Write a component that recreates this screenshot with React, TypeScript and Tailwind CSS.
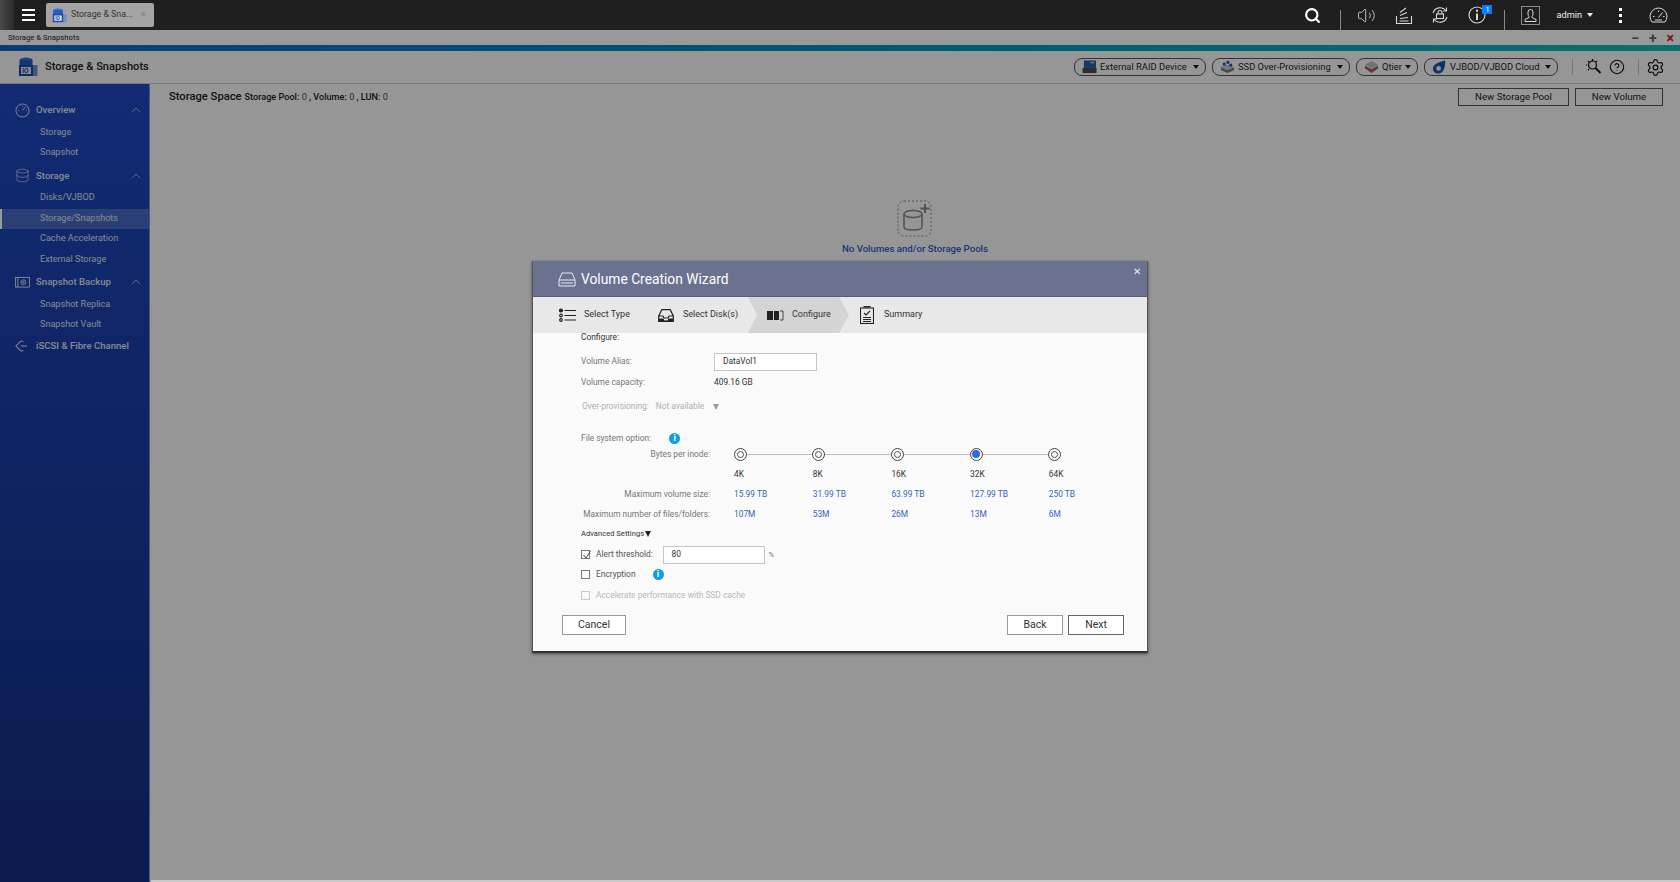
import { ChevronUp, Database, Search, Settings, CircleHelp, Volume2 } from "lucide-react";

const font = { fontFamily: "Roboto, 'Liberation Sans', sans-serif" };

const menu = [
  { label: "Overview", icon: "gauge", open: true, items: ["Storage", "Snapshot"] },
  { label: "Storage", icon: "db", open: true, items: ["Disks/VJBOD", "Storage/Snapshots", "Cache Acceleration", "External Storage"] },
  { label: "Snapshot Backup", icon: "snap", open: true, items: ["Snapshot Replica", "Snapshot Vault"] },
  { label: "iSCSI & Fibre Channel", icon: "iscsi", open: false, items: [] },
];

const inodes = [
  { size: "4K", max: "15.99 TB", files: "107M" },
  { size: "8K", max: "31.99 TB", files: "53M" },
  { size: "16K", max: "63.99 TB", files: "26M" },
  { size: "32K", max: "127.99 TB", files: "13M", active: true },
  { size: "64K", max: "250 TB", files: "6M" },
];

function MenuIcon({ name }: { name: string }) {
  if (name === "gauge")
    return (
      <svg width="15" height="15" viewBox="0 0 16 16" fill="none" stroke="currentColor" strokeWidth="1">
        <circle cx="8" cy="8" r="7" />
        <path d="M8 8l3-4M3.500 8h1M8 3v1M11.800 7.500h1" />
      </svg>
    );
  if (name === "db") return <Database size={15} strokeWidth={1} />;
  if (name === "snap")
    return (
      <svg width="15" height="12" viewBox="0 0 16 13" fill="none" stroke="currentColor" strokeWidth="1">
        <rect x="0.500" y="1.500" width="15" height="10.500" />
        <path d="M3 1.500v10.500" />
        <circle cx="9" cy="6.800" r="2.600" />
        <circle cx="9" cy="6.800" r="0.800" />
      </svg>
    );
  return (
    <svg width="13" height="12" viewBox="0 0 14 12" fill="none" stroke="currentColor" strokeWidth="1.100">
      <path d="M6 1L1 6l5 5h3M9 1H6M6 6h7" />
    </svg>
  );
}

function AppLogo({ size = 20 }: { size?: number }) {
  return (
    <svg width={size} height={size} viewBox="0 0 20 20" className="shrink-0">
      <ellipse cx="8" cy="3" rx="6.500" ry="2.500" fill="#3a72d8" />
      <rect x="1.500" y="3" width="13" height="6" fill="#2a5bc0" />
      <rect x="15" y="8" width="4.500" height="11" fill="#6f8fc8" />
      <rect x="1" y="8" width="14" height="11" fill="#1c4aa6" />
      <rect x="3" y="10" width="10" height="7" fill="#d9e6f7" />
      <text x="4.200" y="16" fontSize="6.500" fill="#1c4aa6" fontFamily="Roboto, sans-serif" fontWeight="700">IO</text>
    </svg>
  );
}

function PillIcon({ kind }: { kind: string }) {
  if (kind === "raid")
    return (
      <svg width="15" height="14" viewBox="0 0 16 15" className="shrink-0">
        <rect x="2" y="0.500" width="13" height="8" fill="#2e5ca8" />
        <rect x="0.500" y="8.500" width="15" height="5.500" fill="#4d4d4d" />
        <rect x="9" y="2" width="4" height="1.500" fill="#b8cbe6" />
      </svg>
    );
  if (kind === "ssd")
    return (
      <svg width="15" height="14" viewBox="0 0 16 15" className="shrink-0">
        <path d="M1 8l7-3 7 3v3l-7 3-7-3z" fill="#7d7d7d" />
        <path d="M1 8l7-3 7 3-7 3z" fill="#c9c9c9" />
        <path d="M3 3h3v3H3zM7 1h3v3H7zM10 4h3v3h-3z" fill="#1f55a8" />
      </svg>
    );
  if (kind === "qtier")
    return (
      <svg width="15" height="14" viewBox="0 0 16 15" className="shrink-0">
        <path d="M8 1l7 4-7 4-7-4z" fill="#c0c0c0" />
        <path d="M1 6l7 4 7-4v3l-7 5-7-5z" fill="#a06060" />
      </svg>
    );
  return (
    <svg width="15" height="14" viewBox="0 0 16 15" className="shrink-0">
      <path d="M14 0.500C14 0.500 15 14.500 6.500 14.500C3 14.500 1 12 1 9C1 5 6 2.500 14 0.500z" fill="#1a55b0" />
      <circle cx="7" cy="9" r="2.500" fill="#f5f5f5" />
    </svg>
  );
}

function Pill({ kind, label, width }: { kind: string; label: string; width: string }) {
  return (
    <div className={`flex h-[18px] items-center rounded-[8px] border border-[#555] pl-[7px] text-[9.400px] text-[#1d1d1d] ${width}`}>
      <PillIcon kind={kind} />
      <span className="ml-[3px] whitespace-nowrap">{label}</span>
      <span className="ml-auto mr-[6px] border-x-[3px] border-t-[4px] border-x-transparent border-t-[#222]" />
    </div>
  );
}

function TopBar() {
  return (
    <header className="relative flex h-[30px] items-center bg-[#1f1f1f] text-[#d8d8d8]">
      <div className="h-full w-[14px] bg-gradient-to-r from-[#4a4a4a] to-[#2b2b2b]" />
      <div className="ml-[8px] flex w-[13px] flex-col gap-[3px]">
        <span className="h-[2px] bg-white" />
        <span className="h-[2px] bg-white" />
        <span className="h-[2px] bg-white" />
      </div>
      <div className="ml-[11px] flex h-[24px] w-[108px] items-center rounded-[2px] bg-[#a4a4a4] pl-[6px] text-[8.800px] text-[#333]">
        <AppLogo size={15} />
        <span className="ml-[4px] whitespace-nowrap">Storage &amp; Sna...</span>
        <span className="ml-[7px] text-[8px] font-bold text-[#7c8ba0]">✕</span>
      </div>
      <div className="ml-auto flex items-center pr-[12px]">
        <Search size={17} strokeWidth={3} className="text-white" />
        <span className="ml-[19px] mt-[10px] h-[20px] w-px bg-[#8a8a8a]" />
        <Volume2 size={19} strokeWidth={1.1} className="ml-[16px]" />
        <svg className="ml-[19px]" width="18" height="20" viewBox="0 0 18 20" fill="none" stroke="currentColor" strokeWidth="1.100">
          <path d="M1.500 11v7.500h15V11M4.500 16h9" />
          <path d="M5 13.500l8-1M5 10.500l7-3M5 7.500l6-4.500" />
        </svg>
        <svg className="ml-[18px]" width="18" height="18" viewBox="0 0 18 18" fill="none" stroke="currentColor" strokeWidth="1.100">
          <path d="M2 7a7.500 7.500 0 0 1 13-2.500M16 11a7.500 7.500 0 0 1-13 2.500" />
          <path d="M15.500 1.500v3.500h-3.500M2.500 16.500V13H6" />
          <rect x="5.500" y="8" width="7" height="4.500" />
          <path d="M7 8V6.500a2 2 0 0 1 4 0V8" />
        </svg>
        <div className="relative ml-[19px] h-[18px] w-[18px]">
          <svg width="18" height="18" viewBox="0 0 18 18" fill="none" stroke="currentColor" strokeWidth="1.100">
            <circle cx="9" cy="9" r="8" />
            <path d="M9 7.500V14" strokeWidth="2" />
            <path d="M9 3.800v2" strokeWidth="2" />
          </svg>
          <span className="absolute -top-[1px] left-[14px] flex h-[9px] w-[10px] items-center justify-center bg-[#0a7cff] text-[8px] leading-none text-white">1</span>
        </div>
        <span className="ml-[18px] mt-[10px] h-[20px] w-px bg-[#8a8a8a]" />
        <div className="ml-[16px] flex h-[19px] w-[19px] items-center justify-center border border-[#8a8a8a]">
          <svg width="15" height="15" viewBox="0 0 15 15" fill="none" stroke="currentColor" strokeWidth="1">
            <path d="M5 6V4a2.500 2.500 0 0 1 5 0v2c0 1-.5 2-1 2.500v1l4 2v2H2v-2l4-2v-1C5.500 8 5 7 5 6z" />
          </svg>
        </div>
        <span className="ml-[16px] text-[9.200px] text-[#eee]">admin</span>
        <span className="ml-[5px] border-x-[3px] border-t-[4px] border-x-transparent border-t-[#ececec]" />
        <div className="ml-[26px] flex flex-col gap-[3px]">
          <span className="h-[3px] w-[3px] bg-white" />
          <span className="h-[3px] w-[3px] bg-white" />
          <span className="h-[3px] w-[3px] bg-white" />
        </div>
        <svg className="ml-[27px]" width="19" height="17" viewBox="0 0 19 17" fill="none" stroke="currentColor" strokeWidth="1">
          <path d="M3 15h13a8.500 8.500 0 1 0-13 0z" />
          <path d="M9.500 10.500l4-5M4 9.500h1.500M9.500 3.500V5M14 9.500h1.500M6 13h7" />
        </svg>
      </div>
    </header>
  );
}

function Sidebar() {
  return (
    <aside className="w-[150px] shrink-0 border-r border-[#8090d8] bg-gradient-to-b from-[#1e48c1] to-[#142e82] pt-[14px] text-[#dfe4f5]">
      {menu.map((m) => (
        <div key={m.label}>
          <div className={`flex items-center pl-[15px] pr-[5px] text-[9.600px] font-medium ${m.items.length ? "h-[24.500px]" : "h-[21px]"}`}>
            <span className="flex w-[21px] shrink-0 justify-start">
              <MenuIcon name={m.icon} />
            </span>
            <span className="whitespace-nowrap">{m.label}</span>
            {m.open && <ChevronUp size={16} strokeWidth={1} className="ml-auto" />}
          </div>
          {m.items.map((item) => (
            <div
              key={item}
              className={`flex h-[20.500px] items-center text-[9.100px] ${item === "Storage/Snapshots" ? "border-l-2 border-white bg-white/20 pl-[38px]" : "pl-[40px]"}`}
            >
              {item}
            </div>
          ))}
        </div>
      ))}
    </aside>
  );
}

function Header() {
  return (
    <div className="flex h-[33px] items-center border-b border-[#cfcfcf] bg-[#fbfbfb] pr-[15px]">
      <div className="ml-[18px]">
        <AppLogo />
      </div>
      <h1 className="ml-[7px] text-[11.100px] font-medium text-[#222]">Storage &amp; Snapshots</h1>
      <div className="ml-auto flex items-center">
        <div className="flex gap-[6px]">
          <Pill kind="raid" label="External RAID Device" width="w-[132px]" />
          <Pill kind="ssd" label="SSD Over-Provisioning" width="w-[138px]" />
          <Pill kind="qtier" label="Qtier" width="w-[62px]" />
          <Pill kind="cloud" label="VJBOD/VJBOD Cloud" width="w-[134px]" />
        </div>
        <span className="ml-[14px] h-[16px] w-px bg-[#c5c5c5]" />
        <svg className="ml-[13px] text-[#111]" width="16" height="16" viewBox="0 0 16 16" fill="none" stroke="currentColor" strokeWidth="1.200">
          <circle cx="6.500" cy="6" r="4" />
          <path d="M9.500 9l5 5" strokeWidth="2" />
          <path d="M6.500 0v2M1 6H0M2 2l1 1M11 2l-1 1M2 11l1-1" />
        </svg>
        <CircleHelp size={16} strokeWidth={1.600} className="ml-[7px] text-[#111]" />
        <span className="ml-[13px] h-[16px] w-px bg-[#c5c5c5]" />
        <Settings size={19} strokeWidth={1.500} className="ml-[7px] text-[#111]" />
      </div>
    </div>
  );
}

function Info() {
  return (
    <span className="flex h-[11px] w-[11px] items-center justify-center rounded-full bg-[#0f9bf0] text-[9px] font-bold leading-none text-white">i</span>
  );
}

function Radio({ active }: { active?: boolean }) {
  return (
    <span className="relative z-10 flex h-[13px] w-[13px] shrink-0 items-center justify-center rounded-full border-[1.500px] border-[#444] bg-[#fafafa]">
      <span className={active ? "h-[8px] w-[8px] rounded-full bg-[#2f6bd8]" : "h-[7px] w-[7px] rounded-full border border-[#555]"} />
    </span>
  );
}

function Checkbox({ checked, disabled }: { checked?: boolean; disabled?: boolean }) {
  return (
    <span className={`relative flex h-[9px] w-[9px] shrink-0 items-center justify-center border ${disabled ? "border-[#c8c8c8]" : "border-[#777]"}`}>
      {checked && (
        <svg className="absolute -top-[1px] left-0" width="10" height="10" viewBox="0 0 10 10" fill="none" stroke="#444" strokeWidth="1">
          <path d="M1.500 5l2.500 3 4.500-7" />
        </svg>
      )}
    </span>
  );
}

function DialogButton({ label, strong, width }: { label: string; strong?: boolean; width: string }) {
  return (
    <button className={`h-[20px] border bg-white text-[10.500px] text-[#333] ${strong ? "border-[#666]" : "border-[#9a9a9a]"} ${width}`}>
      {label}
    </button>
  );
}

function Wizard() {
  return (
    <div className="absolute left-[532px] top-[261px] z-30 w-[616px] border-x border-b-2 border-x-[#555] border-b-[#333] bg-[#fafafa] shadow-[0_1px_3px_rgba(0,0,0,0.5)]" style={font}>
      <div className="relative flex h-[36px] items-center border-b border-[#555e80] bg-[#6b7290] pl-[25px] pt-[2px] text-white">
        <svg width="18" height="15" viewBox="0 0 18 15" fill="none" stroke="#e6e8f0" strokeWidth="1">
          <path d="M4 1h10l3 7v6H1V8zM1 8h16M3 11h12" />
        </svg>
        <span className="ml-[5px] text-[13.800px]">Volume Creation Wizard</span>
        <span className="absolute right-[6px] top-[6px] text-[10px] leading-none text-[#e6e8f0]">✕</span>
      </div>
      <div className="flex h-[36px] items-center bg-[#e8e8e8] text-[9px] text-[#333]">
        <div className="flex w-[125px] items-center pl-[26px]">
          <svg width="17" height="15" viewBox="0 0 17 15" fill="none" stroke="#222" strokeWidth="1.200">
            <circle cx="2" cy="2.500" r="1.500" fill="#222" />
            <circle cx="2" cy="7.500" r="1.300" />
            <circle cx="2" cy="12" r="1.300" />
            <path d="M5.500 2.500H17M5.500 7.500H17M5.500 12H17" />
          </svg>
          <span className="ml-[8px]">Select Type</span>
        </div>
        <div className="flex w-[90px] items-center">
          <svg width="16" height="13" viewBox="0 0 16 13" fill="none" stroke="#222" strokeWidth="1.200">
            <path d="M3.800 0.700h8.400L15.300 7v5.300H0.700V7zM0.700 7H5l1 2h4l1-2h4.300" />
            <path d="M1 9.500h4.500l.8 2h3.400l.8-2H15v2.500H1z" fill="#222" stroke="none" />
          </svg>
          <span className="ml-[9px] whitespace-nowrap">Select Disk(s)</span>
        </div>
        <div className="flex h-full w-[101px] items-center bg-[#d4d4d4] pl-[19px] [clip-path:polygon(0_0,91px_0,100%_50%,91px_100%,0_100%,9px_50%)]">
          <svg width="17" height="11" viewBox="0 0 17 11">
            <rect x="0" y="1" width="6" height="9" fill="#222" />
            <rect x="7" y="1" width="5" height="9" fill="#222" />
            <path d="M13 1h3v9h-3" fill="none" stroke="#222" strokeWidth="0.800" />
          </svg>
          <span className="ml-[8px]">Configure</span>
        </div>
        <div className="flex items-center pl-[11px]">
          <svg width="14" height="18" viewBox="0 0 14 18" fill="none" stroke="#222" strokeWidth="1.100">
            <rect x="0.500" y="2" width="13" height="15.500" />
            <path d="M3.500 0.800h7" strokeWidth="1.500" />
            <path d="M4 7l2 2 4-4M3 11.500h8M3 13.500h8M3 15.500h8" />
          </svg>
          <span className="ml-[10px]">Summary</span>
        </div>
      </div>

      <div className="pl-[48px] pr-[24px] text-[8.400px] text-[#777]">
        <div className="flex h-[9px] items-center text-[#333]">Configure:</div>
        <div className="mt-[10px] flex h-[19px] items-center">
          <span className="w-[133px]">Volume Alias:</span>
          <div className="flex h-[18px] w-[103px] items-center border border-[#c4c4c4] bg-white pl-[8px] text-[#333]">DataVol1</div>
        </div>
        <div className="flex h-[22px] items-center">
          <span className="w-[133px]">Volume capacity:</span>
          <span className="text-[#333]">409.16 GB</span>
        </div>
        <div className="flex h-[27px] items-center pl-[1px] text-[#b0b0b0]">
          <span>Over-provisioning:</span>
          <span className="ml-[7px]">Not available</span>
          <span className="ml-[9px] border-x-[3px] border-t-[6px] border-x-transparent border-t-[#999]" />
        </div>
        <div className="mt-[10px] flex h-[16px] items-center">
          <span>File system option:</span>
          <span className="ml-[18px]">
            <Info />
          </span>
        </div>
        <div className="grid grid-cols-[129px_repeat(5,78.700px)]">
          <div className="flex h-[16px] items-center justify-end">Bytes per inode:</div>
          <div className="relative col-span-5 flex h-[16px] items-center pl-[23.500px]">
            <span className="absolute left-[30px] top-[7.500px] h-[1px] w-[313px] bg-[#bdbdbd]" />
            {inodes.map((n) => (
              <span key={n.size} className="flex w-[78.700px] shrink-0">
                <Radio active={n.active} />
              </span>
            ))}
          </div>
          <div className="h-[22px]" />
          {inodes.map((n) => (
            <div key={n.size} className="flex h-[22px] items-center pl-[24px] pt-[3px] text-[#333]">
              {n.size}
            </div>
          ))}
          <div className="flex h-[21px] items-center justify-end">Maximum volume size:</div>
          {inodes.map((n) => (
            <div key={n.size} className="flex h-[21px] items-center whitespace-nowrap pl-[24px] text-[#3763b8]">{n.max}</div>
          ))}
          <div className="flex h-[18px] items-center justify-end whitespace-nowrap">Maximum number of files/folders:</div>
          {inodes.map((n) => (
            <div key={n.size} className="flex h-[18px] items-center pl-[24px] text-[#3763b8]">{n.files}</div>
          ))}
        </div>
        <div className="flex h-[22px] items-center text-[7.600px] text-[#333]">
          Advanced Settings
          <span className="ml-[1px] border-x-[3px] border-t-[6px] border-x-transparent border-t-[#222]" />
        </div>
        <div className="flex h-[19px] items-center">
          <Checkbox checked />
          <span className="ml-[6px] w-[66.500px] text-[#555]">Alert threshold:</span>
          <div className="flex h-[18px] w-[102px] items-center border border-[#c4c4c4] bg-white pl-[8px] text-[#333]">80</div>
          <span className="ml-[4px] text-[7.500px]">%</span>
        </div>
        <div className="flex h-[21px] items-center">
          <Checkbox />
          <span className="ml-[6px] text-[#555]">Encryption</span>
          <span className="ml-[17px]">
            <Info />
          </span>
        </div>
        <div className="flex h-[20px] items-center text-[#b8b8b8]">
          <Checkbox disabled />
          <span className="ml-[6px]">Accelerate performance with SSD cache</span>
        </div>
      </div>
      <div className="mt-[10px] flex items-center pb-[16px] pl-[29px] pr-[23px]">
        <DialogButton label="Cancel" width="w-[64px]" />
        <div className="ml-auto flex gap-[5px]">
          <DialogButton label="Back" width="w-[56px]" />
          <DialogButton label="Next" strong width="w-[56px]" />
        </div>
      </div>
    </div>
  );
}

export default function App() {
  return (
    <div className="relative h-[882px] w-[1680px] overflow-hidden bg-white" style={font}>
      <TopBar />
      <div className="flex h-[15px] items-center justify-between bg-white pl-[8px] pr-[6px] text-[7.700px] text-[#222]">
        <span>Storage &amp; Snapshots</span>
        <span className="flex gap-[10px] text-[14px] font-bold leading-none text-[#666]">
          <span>−</span>
          <span>+</span>
          <span className="text-[#d02020]">×</span>
        </span>
      </div>
      <div className="h-[6px] bg-gradient-to-r from-[#1565c8] to-[#12bdb4]" />
      <Header />
      <div className="flex h-[798px]">
        <Sidebar />
        <main className="flex-1 bg-[#fafafa]">
          <div className="flex h-[22px] items-start justify-between pl-[19px] pr-[17px] pt-[4px]">
            <div className="flex items-baseline pt-[1px]">
              <span className="text-[11.200px] font-medium text-[#222]">Storage Space</span>
              <span className="ml-[3px] text-[9.150px] font-medium text-[#222]">
                Storage Pool: <span className="font-normal text-[#3a4a80]">0</span> , Volume: <span className="font-normal text-[#3a4a80]">0</span> , LUN: <span className="font-normal text-[#3a4a80]">0</span>
              </span>
            </div>
            <div className="flex gap-[6px]">
              <button className="h-[18px] w-[111px] border border-[#555] text-[9.700px] text-[#222]">New Storage Pool</button>
              <button className="h-[18px] w-[88px] border border-[#555] text-[9.700px] text-[#222]">New Volume</button>
            </div>
          </div>
          <div className="mt-[94px] flex flex-col items-center">
            <svg width="36" height="37" viewBox="0 0 36 37" fill="none" stroke="#888">
              <rect x="1" y="1" width="33" height="35" rx="6" strokeDasharray="2 2" />
              <ellipse cx="16" cy="14" rx="9" ry="3.500" strokeWidth="1.500" />
              <path d="M7 14v13c0 4 18 4 18 0V14" strokeWidth="1.500" />
              <path d="M28 4v9M23.500 8.500h9" strokeWidth="2" />
            </svg>
            <span className="mt-[5px] text-[9.650px] font-medium text-[#2d5ccc]">No Volumes and/or Storage Pools</span>
          </div>
        </main>
      </div>
      <div className="absolute inset-x-0 bottom-0 top-[30px] z-20 bg-black/40" />
      <div className="absolute bottom-0 left-[151px] right-0 z-20 h-[2px] bg-[#c8c8c8]" />
      <Wizard />
    </div>
  );
}
